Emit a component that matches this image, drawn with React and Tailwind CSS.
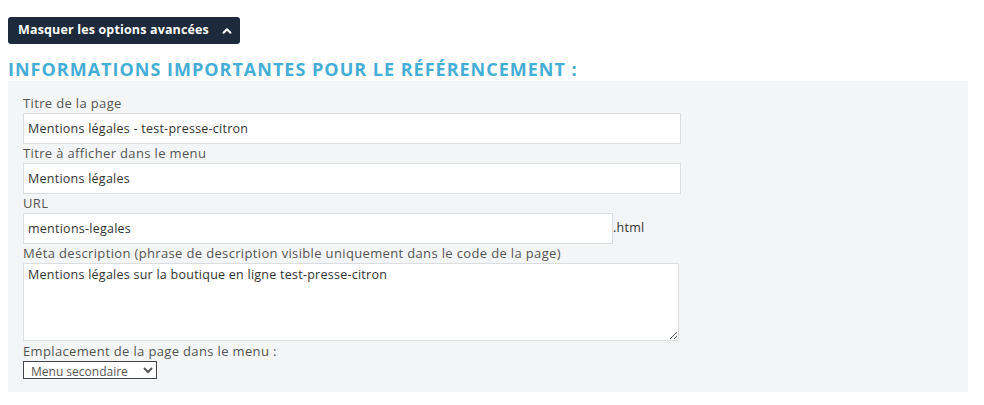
import { ChevronUp } from "lucide-react";

function Field({ label, children }) {
  return (
    <div>
      <div className="h-[19px] text-[13px] leading-[19px] tracking-[0.35px] text-[#555]">{label}</div>
      {children}
    </div>
  );
}

const inputCls =
  "block h-[31px] border border-[#dcdde0] bg-white px-[4px] text-[12.5px] tracking-[0.25px] text-[#333] outline-none font-['Open_Sans',sans-serif]";

export default function App() {
  return (
    <div className="min-h-[405px] bg-white px-2 pt-[17px] font-['Open_Sans','Liberation_Sans',sans-serif]">
      <button className="flex h-[27px] w-[232px] items-center gap-[11px] rounded-[3px] bg-[#1c2a3b] pl-[10px] text-[12.5px] font-bold tracking-[0.15px] text-white">
        <span>Masquer les options avancées</span>
        <ChevronUp size={14} strokeWidth={3.5} />
      </button>

      <h2 className="mt-[14px] h-[23px] text-[18px] font-bold uppercase leading-[23px] tracking-[1px] text-[#45aed6]">
        Informations importantes pour le référencement :
      </h2>

      <div className="w-[960px] bg-[#f4f5f7] px-[15px] pb-[13px] pt-[13px]">
        <Field label="Titre de la page">
          <input readOnly value="Mentions légales - test-presse-citron" className={`${inputCls} w-[658px]`} />
        </Field>
        <Field label="Titre à afficher dans le menu">
          <input readOnly value="Mentions légales" className={`${inputCls} w-[658px]`} />
        </Field>
        <Field label="URL">
          <div className="flex items-center">
            <input readOnly value="mentions-legales" className={`${inputCls} w-[590px]`} />
            <span className="text-[12.5px] tracking-[0.25px] text-[#333]">.html</span>
          </div>
        </Field>
        <Field label="Méta description (phrase de description visible uniquement dans le code de la page)">
          <textarea
            readOnly
            value="Mentions légales sur la boutique en ligne test-presse-citron"
            className="block h-[78px] w-[656px] resize border border-[#dcdde0] bg-white px-[4px] py-[2px] text-[12.5px] tracking-[0.25px] text-[#333] outline-none font-['Open_Sans',sans-serif]"
          />
        </Field>
        <div className="mt-[1px]">
          <div className="h-[19px] text-[13px] leading-[19px] tracking-[0.35px] text-[#555]">
            Emplacement de la page dans le menu :
          </div>
          <select
            defaultValue="secondaire"
            className="block h-[18px] w-[134px] border border-[#444] bg-white pl-[3px] text-[12px] leading-[16px] text-[#555] font-['Open_Sans',sans-serif]"
          >
            <option value="principal">Menu principal</option>
            <option value="secondaire">Menu secondaire</option>
          </select>
        </div>
      </div>
    </div>
  );
}
